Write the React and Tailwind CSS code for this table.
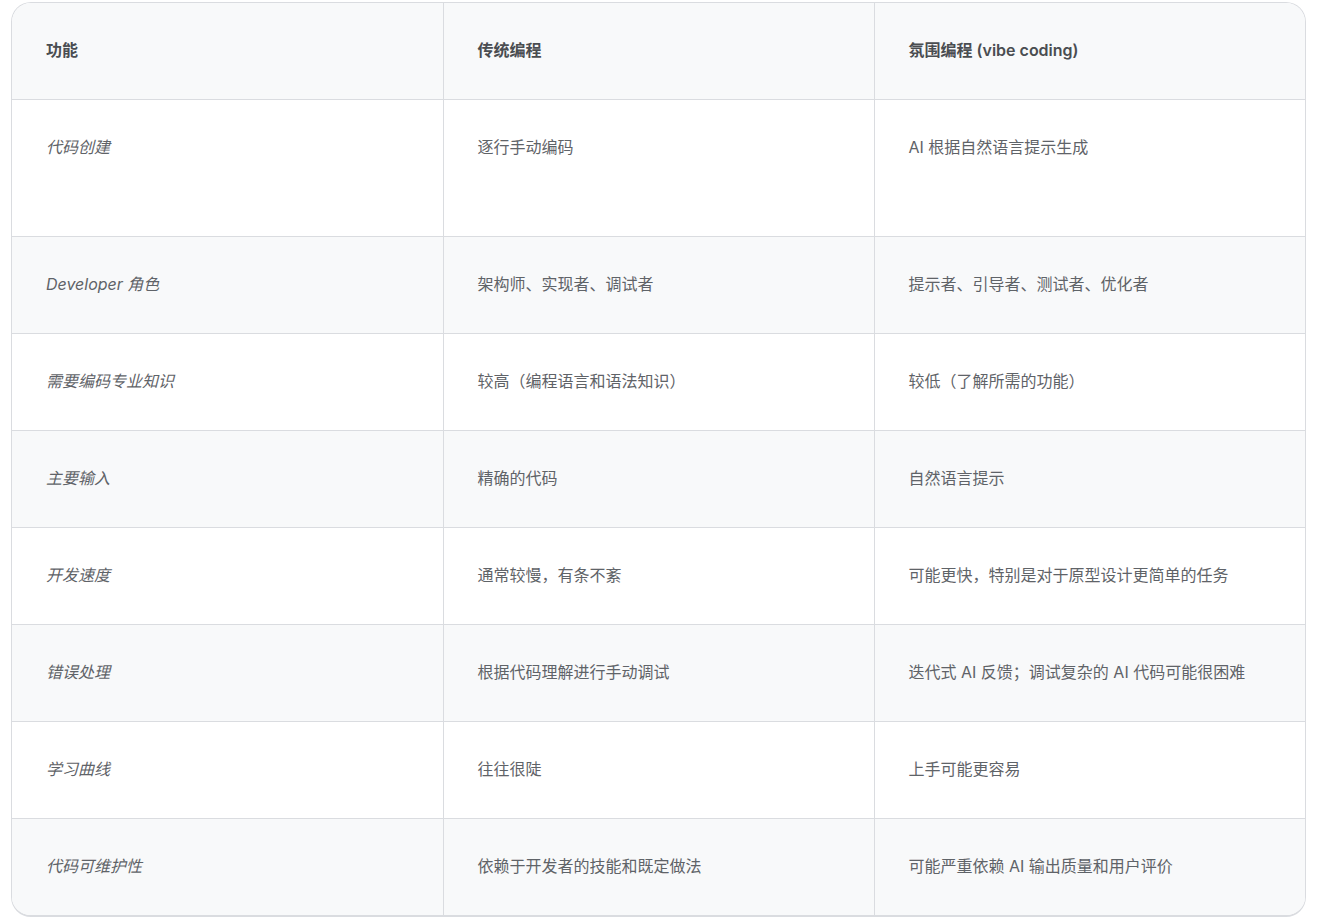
const rows = [
  ['代码创建', '逐行手动编码', 'AI 根据自然语言提示生成'],
  ['Developer 角色', '架构师、实现者、调试者', '提示者、引导者、测试者、优化者'],
  ['需要编码专业知识', '较高（编程语言和语法知识）', '较低（了解所需的功能）'],
  ['主要输入', '精确的代码', '自然语言提示'],
  ['开发速度', '通常较慢，有条不紊', '可能更快，特别是对于原型设计更简单的任务'],
  ['错误处理', '根据代码理解进行手动调试', '迭代式 AI 反馈；调试复杂的 AI 代码可能很困难'],
  ['学习曲线', '往往很陡', '上手可能更容易'],
  ['代码可维护性', '依赖于开发者的技能和既定做法', '可能严重依赖 AI 输出质量和用户评价'],
];

export default function App() {
  return (
    <div className="min-h-screen bg-white pt-[2px] px-[11px] font-['Inter','Noto_Sans_CJK_SC',sans-serif] text-[16px] text-[#5f6368]">
      <div className="overflow-hidden rounded-[20px] border border-[#dadce0] border-b-2">
        <table className="w-full table-fixed border-collapse">
          <thead>
            <tr className="h-[96px] bg-[#f8f9fa] border-b border-[#dadce0]">
              <th className="pl-[34px] pb-[2px] text-left font-semibold text-[#4a4d51] align-middle">功能</th>
              <th className="pl-[34px] pb-[2px] text-left font-semibold text-[#4a4d51] align-middle border-l border-[#dadce0]">传统编程</th>
              <th className="pl-[34px] pb-[2px] text-left font-semibold text-[#4a4d51] align-middle border-l border-[#dadce0]">氛围编程 (vibe coding)</th>
            </tr>
          </thead>
          <tbody>
            {rows.map((r, i) => (
              <tr
                key={i}
                className={`${i === 0 ? 'h-[137px]' : 'h-[97px]'} ${i % 2 === 1 ? 'bg-[#f8f9fa]' : 'bg-white'} ${i < rows.length - 1 ? 'border-b border-[#dadce0]' : ''}`}
              >
                <td className="pl-[34px] pt-[35px] align-top italic leading-6">{r[0]}</td>
                <td className="pl-[34px] pt-[35px] align-top leading-6 border-l border-[#dadce0]">{r[1]}</td>
                <td className="pl-[34px] pt-[35px] align-top leading-6 border-l border-[#dadce0]">{r[2]}</td>
              </tr>
            ))}
          </tbody>
        </table>
      </div>
    </div>
  );
}
